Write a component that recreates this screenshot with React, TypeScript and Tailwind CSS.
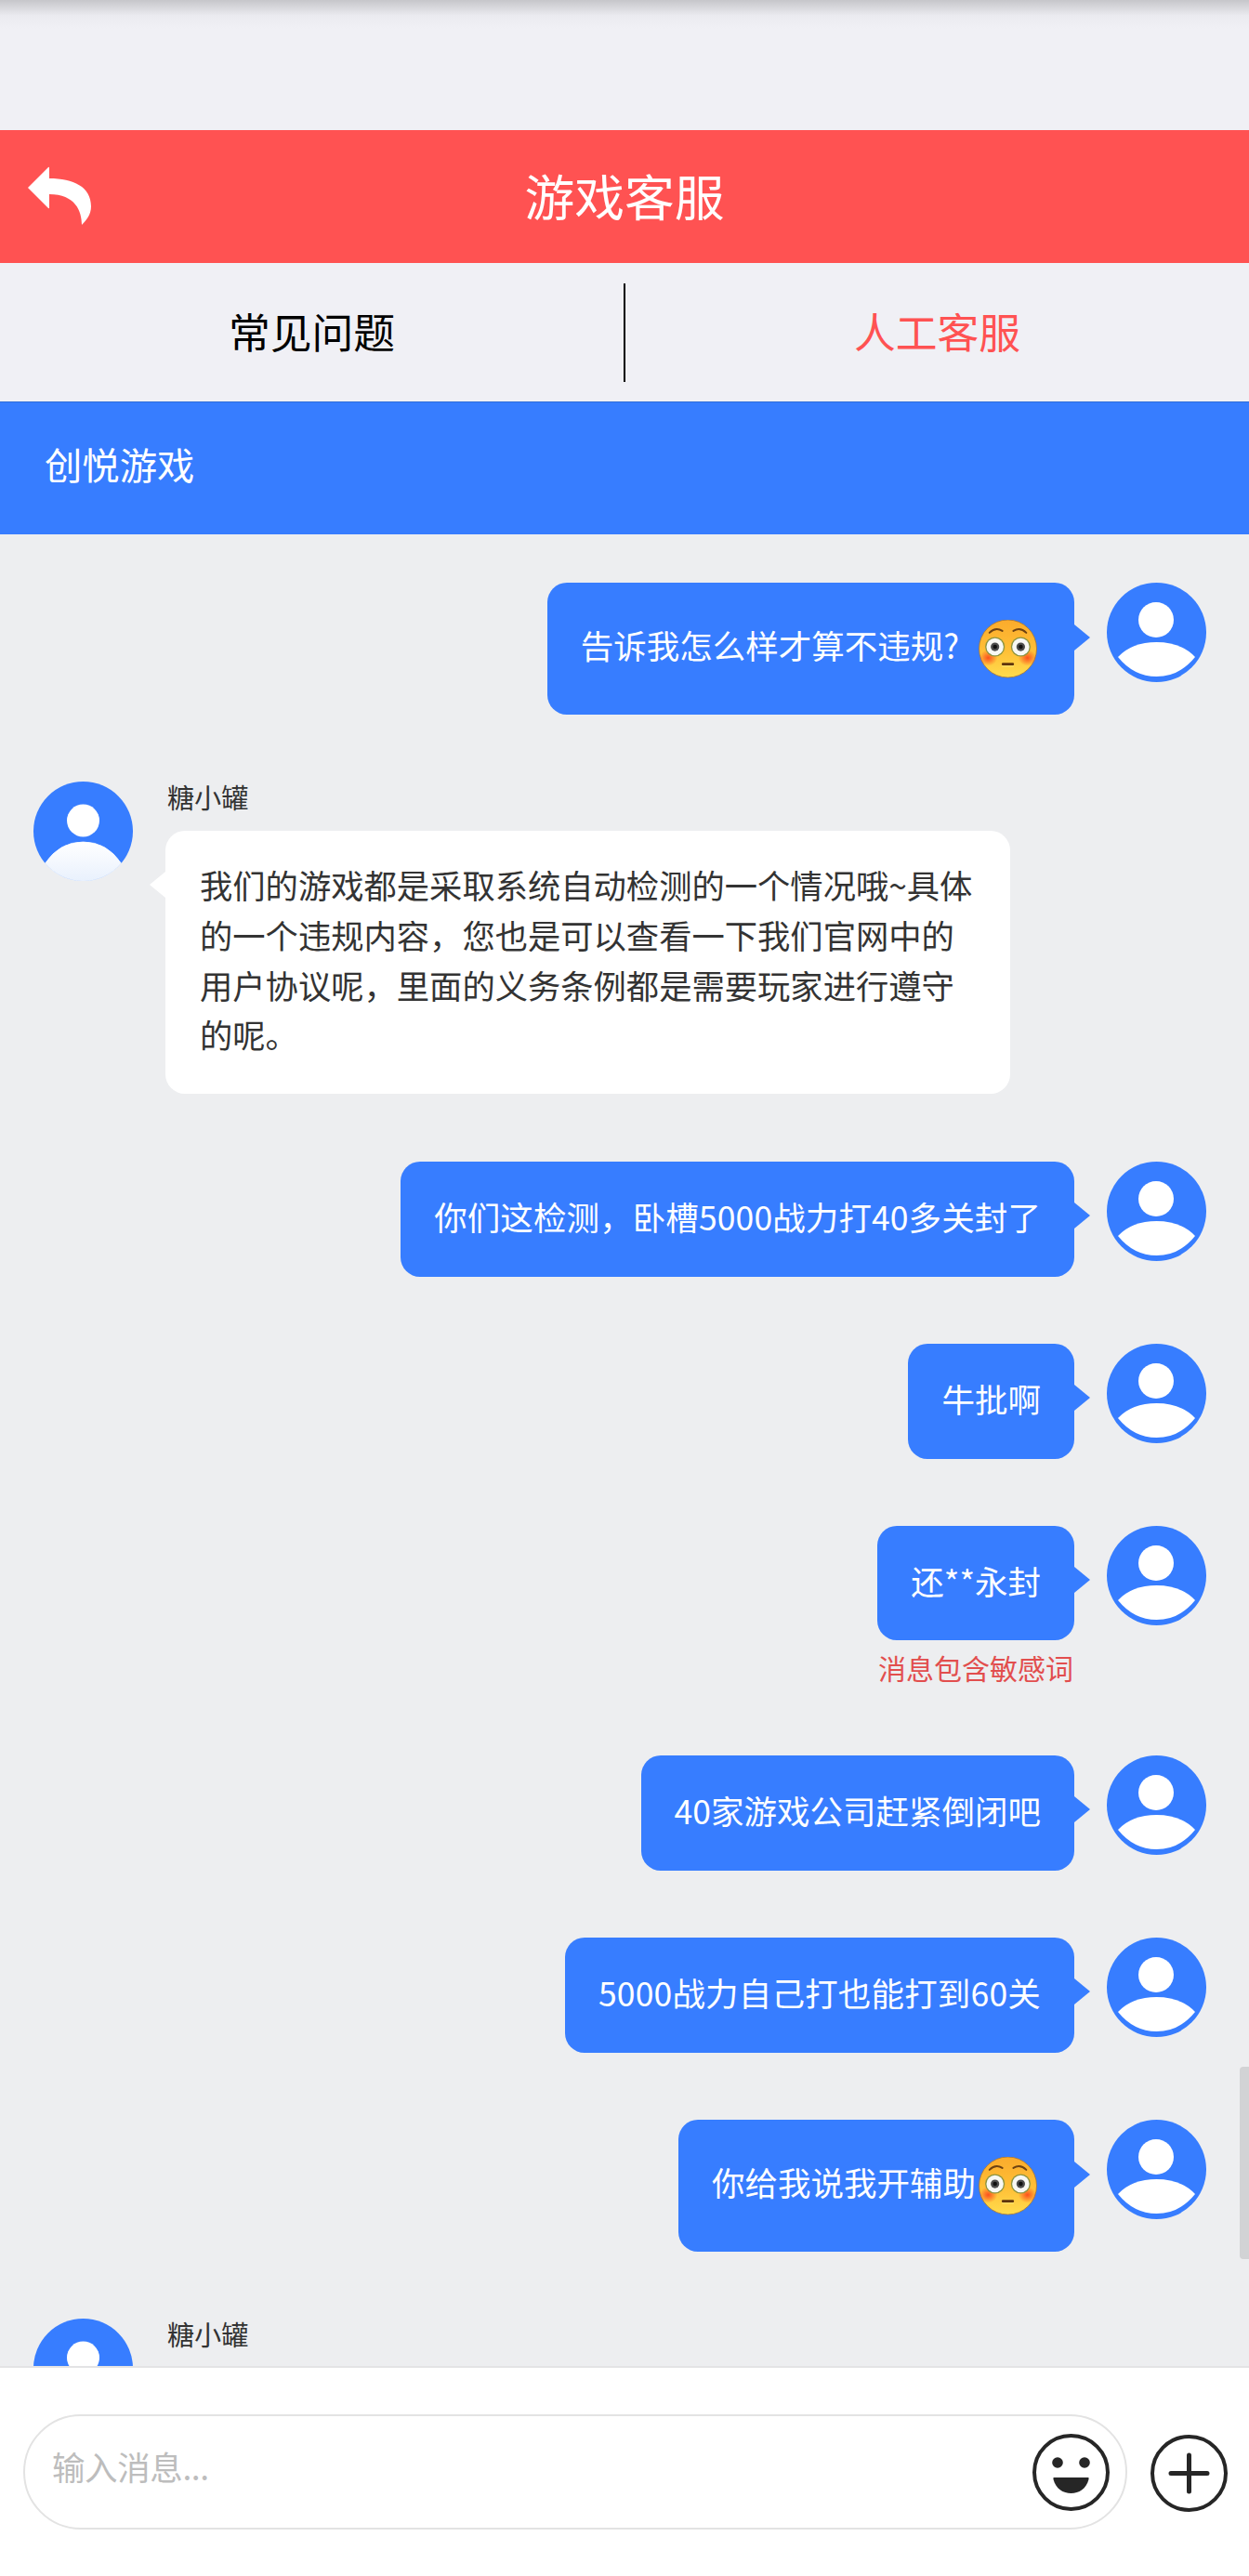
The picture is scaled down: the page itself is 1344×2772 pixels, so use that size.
import React from "react";

const font = { fontFamily: '"Noto Sans CJK SC", Roboto, sans-serif' };

function Avatar({ variant }: { variant: "user" | "agent" }) {
  const id = variant === "user" ? "u" : "a";
  return (
    <svg viewBox="0 0 107 107" className="w-[107px] h-[107px] shrink-0">
      <defs>
        <linearGradient id={`g${id}`} x1="0" y1="0" x2="0" y2="1">
          <stop offset="0" stopColor="#ffffff" />
          <stop offset="1" stopColor="#e9f1fd" />
        </linearGradient>
      </defs>
      <circle cx="53.5" cy="53.5" r="53.5" fill="#377dff" />
      {variant === "user" ? (
        <>
          <circle cx="53" cy="40" r="19" fill="#fff" />
          <path d="M12 80 Q27 64 53.5 64 Q80 64 95 80 Q78 101 53.5 101 Q29 101 12 80 Z" fill="#fff" />
        </>
      ) : (
        <>
          <circle cx="53.5" cy="42" r="17.5" fill="#fff" />
          <path
            d="M12.6 88 Q28 65 53.5 65 Q79 65 94.4 88 A53.5 53.5 0 0 1 12.6 88 Z"
            fill={`url(#g${id})`}
            stroke={`url(#g${id})`}
            strokeWidth="0.8"
          />
        </>
      )}
    </svg>
  );
}

function Flushed({ id }: { id: string }) {
  return (
    <svg viewBox="0 0 100 100" className="w-[67px] h-[66px] shrink-0">
      <defs>
        <linearGradient id={`f${id}`} x1="0" y1="0" x2="0" y2="1">
          <stop offset="0" stopColor="#fbab2c" />
          <stop offset="0.55" stopColor="#ffc037" />
          <stop offset="1" stopColor="#ffdc4d" />
        </linearGradient>
        <radialGradient id={`c${id}`} cx="50%" cy="50%" r="50%">
          <stop offset="0" stopColor="#fb4a1c" stopOpacity="0.95" />
          <stop offset="1" stopColor="#fb4a1c" stopOpacity="0" />
        </radialGradient>
      </defs>
      <ellipse cx="47" cy="47" rx="47" ry="47" fill={`url(#f${id})`} stroke="#a87430" strokeWidth="1.2" />
      <ellipse cx="15" cy="62" rx="15" ry="13" fill={`url(#c${id})`} />
      <ellipse cx="79" cy="62" rx="15" ry="13" fill={`url(#c${id})`} />
      <path d="M17 21 Q27 11 38 18" fill="none" stroke="#6e4212" strokeWidth="3" strokeLinecap="round" />
      <path d="M56 18 Q67 11 77 21" fill="none" stroke="#6e4212" strokeWidth="3" strokeLinecap="round" />
      {[26, 68].map((cx) => (
        <g key={cx}>
          <circle cx={cx} cy="44" r="16" fill="#8c9440" />
          <circle cx={cx} cy="44" r="14" fill="#f8f8f4" />
          <circle cx={cx} cy="44" r="7" fill="#4c4c4c" />
          <circle cx={cx} cy="44" r="3.5" fill="#111" />
        </g>
      ))}
      <rect x="37" y="70" width="20" height="4.5" rx="2" fill="#5e340c" />
      <rect x="37" y="74.5" width="20" height="2" rx="1" fill="#ffe56e" />
    </svg>
  );
}

function Sent({ children, warn, tracking = "" }: { children: React.ReactNode; warn?: string; tracking?: string }) {
  return (
    <div className="flex justify-end items-start pr-[46px] mb-[72px]">
      <div className="flex flex-col items-end">
        <div
          className={`relative bg-[#377dff] rounded-[21px] px-[36px] pt-[32px] pb-[38px] text-white text-[35.5px] leading-[53.76px] whitespace-nowrap ${tracking}`}
        >
          {children}
          <span className="absolute top-[44px] right-[-17px] w-0 h-0 border-y-[14px] border-y-transparent border-l-[17px] border-l-[#377dff]" />
        </div>
        {warn && <div className="mt-[9px] mb-[3px] pr-[1px] text-[30px] leading-[40px] text-[#e24e4e]">{warn}</div>}
      </div>
      <div className="ml-[35px]">
        <Avatar variant="user" />
      </div>
    </div>
  );
}

function SentEmoji({ text, id, gap }: { text: string; id: string; gap: string }) {
  return (
    <div className="flex justify-end items-start pr-[46px] mb-[72px]">
      <div className="relative bg-[#377dff] rounded-[21px] px-[36px] pt-[40px] pb-[36px] text-white text-[35.5px] leading-[54px] whitespace-nowrap flex items-center">
        <span className={`pb-[12px] ${gap}`}>{text}</span>
        <Flushed id={id} />
        <span className="absolute top-[45px] right-[-17px] w-0 h-0 border-y-[14px] border-y-transparent border-l-[17px] border-l-[#377dff]" />
      </div>
      <div className="ml-[35px]">
        <Avatar variant="user" />
      </div>
    </div>
  );
}

export default function App() {
  return (
    <div className="w-[1344px] h-[2772px] flex flex-col overflow-hidden bg-[#f0f0f5]" style={font}>
      <div className="h-[140px] shrink-0 bg-gradient-to-b from-[#c6c6ca] via-[#ebebf0] via-[12%] to-[#f0f0f5] to-[22%]" />

      <div className="relative h-[143px] shrink-0 bg-[#ff5252] flex items-center justify-center pb-[3px] text-white text-[53.76px]">
        <svg viewBox="0 0 69 63" className="absolute left-[29px] top-[39px] w-[69px] h-[63px]" fill="#fff">
          <path d="M1 23 L23 1 Q24 0 24 2 L24 13 C50 13 69 22 69 43 C69 52 64 58 59 63 C59 48 52 30 24 30 L24 44 Q24 46 23 45 Z" />
        </svg>
        游戏客服
      </div>

      <div className="h-[149px] shrink-0 flex items-center text-[44.8px]">
        <div className="flex-1 text-center text-black pb-[4px]">常见问题</div>
        <div className="w-[2px] h-[106px] bg-black" />
        <div className="flex-1 text-center text-[#ff5252] pb-[4px]">人工客服</div>
      </div>

      <div className="h-[143px] shrink-0 bg-[#377dff] border-t border-t-[#2f6dd8] flex items-center pl-[48px] pb-[10px] text-white text-[40.32px]">
        创悦游戏
      </div>

      <div className="relative flex-1 min-h-0 overflow-hidden bg-[#edeef0] pt-[52px]">
        <SentEmoji text="告诉我怎么样才算不违规?" id="a" gap="mr-[21px]" />

        <div className="flex items-start pl-[36px] mb-[73px]">
          <Avatar variant="agent" />
          <div className="ml-[35px]">
            <div className="pl-[2px] text-[29.12px] leading-[32px] mb-[21px] text-[#333]">糖小罐</div>
            <div className="relative bg-white rounded-[21px] w-[909px] px-[37px] pt-[31px] pb-[37px] text-[#333] text-[35.3px] leading-[53.76px] whitespace-nowrap">
              我们的游戏都是采取系统自动检测的一个情况哦~具体
              <br />
              的一个违规内容，您也是可以查看一下我们官网中的
              <br />
              用户协议呢，里面的义务条例都是需要玩家进行遵守
              <br />
              的呢。
              <span className="absolute top-[44px] left-[-17px] w-0 h-0 border-y-[14px] border-y-transparent border-r-[17px] border-r-white" />
            </div>
          </div>
        </div>

        <Sent tracking="tracking-[0.1px]">你们这检测，卧槽5000战力打40多关封了</Sent>
        <Sent>牛批啊</Sent>
        <Sent warn="消息包含敏感词">还**永封</Sent>
        <Sent>40家游戏公司赶紧倒闭吧</Sent>
        <Sent tracking="tracking-[0.18px]">5000战力自己打也能打到60关</Sent>
        <SentEmoji text="你给我说我开辅助" id="b" gap="mr-[3px]" />

        <div className="flex items-start pl-[36px]">
          <Avatar variant="agent" />
          <div className="ml-[35px]">
            <div className="pl-[2px] text-[29.12px] leading-[32px] text-[#333]">糖小罐</div>
          </div>
        </div>

        <div className="absolute right-0 top-[1649px] w-[10px] h-[207px] rounded-l-[4px] bg-[#d2d3d5]" />
      </div>

      <div className="h-[226px] shrink-0 bg-white border-t-2 border-t-[#e3e3e5] pt-[50px] pl-[25px] pr-[23px] flex items-start">
        <div className="w-[1188px] h-[124px] rounded-full border-2 border-[#e3e3e3] flex items-center justify-between pl-[29px] pr-[17px]">
          <span className="pb-[13px] text-[35.5px] tracking-[-0.4px] text-[#bdbdbd]">输入消息...</span>
          <svg viewBox="0 0 83 83" className="w-[83px] h-[83px]">
            <circle cx="41.5" cy="41.5" r="39.5" fill="none" stroke="#262626" strokeWidth="4" />
            <circle cx="27" cy="31" r="5.8" fill="#262626" />
            <circle cx="56" cy="31" r="5.8" fill="#262626" />
            <path d="M23 47 H60 Q61 47 60.5 49 C58 59 50 64 41.5 64 C33 64 25 59 22.5 49 Q22 47 23 47 Z" fill="#262626" />
          </svg>
        </div>
        <svg viewBox="0 0 83 83" className="w-[83px] h-[83px] ml-[25px] mt-[22px] shrink-0">
          <circle cx="41.5" cy="41.5" r="39.5" fill="none" stroke="#262626" strokeWidth="4" />
          <path d="M22 41.5 H61 M41.5 22 V61" fill="none" stroke="#262626" strokeWidth="5" strokeLinecap="round" />
        </svg>
      </div>
    </div>
  );
}
